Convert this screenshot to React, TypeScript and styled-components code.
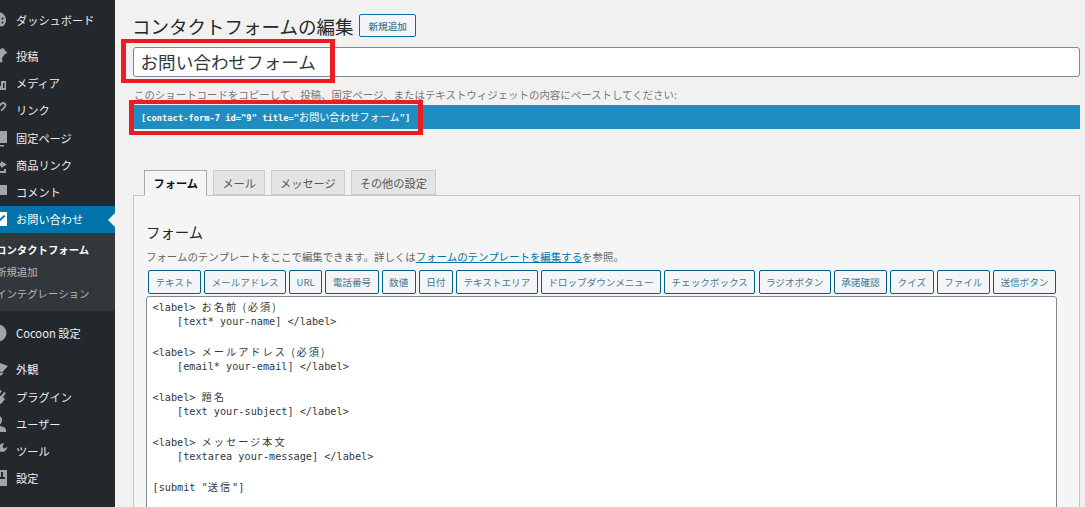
import React from "react";
import styled, { createGlobalStyle } from "styled-components";

const JP = `"Noto Sans CJK JP", "Noto Sans", sans-serif`;
const MONO = `"DejaVu Sans Mono", "Liberation Mono", "Noto Sans CJK JP", monospace`;

const Global = createGlobalStyle`
  html, body { margin: 0; padding: 0; height: 507px; overflow: hidden; background: #f1f1f1; }
  #root { height: 507px; }
  * { box-sizing: border-box; }
`;

const Page = styled.div`
  display: flex;
  width: 1085px;
  height: 507px;
  overflow: hidden;
  font-family: ${JP};
`;

const Sidebar = styled.nav`
  flex: 0 0 115px;
  height: 507px;
  background: #23282d;
  padding-top: 6px;
  overflow: hidden;
`;

const Item = styled.div<{ $active?: boolean; $top?: number }>`
  position: relative;
  display: flex;
  align-items: center;
  gap: 8px;
  height: 27.25px;
  margin-top: ${(p) => p.$top ?? 0}px;
  font-size: 11.2px;
  color: ${(p) => (p.$active ? "#fff" : "#eee")};
  background: ${(p) => (p.$active ? "#0073aa" : "transparent")};
  white-space: nowrap;
  svg { flex: none; margin-left: -12px; color: ${(p) => (p.$active ? "#fff" : "#a0a5aa")}; }
`;

const Arrow = styled.span`
  position: absolute;
  right: 0;
  top: 7px;
  border: 7px solid transparent;
  border-right-color: #f1f1f1;
  border-left-width: 0;
`;

const Sub = styled.div`
  height: 78px;
  padding: 6px 0 0;
  background: #32373c;
`;

const SubItem = styled.div<{ $on?: boolean }>`
  height: 22px;
  line-height: 22px;
  font-size: 10.4px;
  white-space: nowrap;
  margin-left: -4px;
  font-weight: ${(p) => (p.$on ? 700 : 400)};
  color: ${(p) => (p.$on ? "#fff" : "#b4b9be")};
`;

const Main = styled.main`
  flex: 1;
  min-width: 0;
  padding: 0 5px 0 18px;
  color: #444;
`;

const TitleRow = styled.div`
  display: flex;
  align-items: center;
  gap: 6px;
  height: 47px;
  padding-top: 4px;
  margin-left: -1px;
`;

const Heading = styled.h1`
  margin: 0;
  font-size: 18.5px;
  font-weight: 400;
  color: #23282d;
  white-space: nowrap;
`;

const AddNew = styled.span`
  display: flex;
  align-items: center;
  height: 23px;
  padding: 0 8px;
  font-size: 9.6px;
  font-weight: 500;
  color: #47788f;
  background: #f3f5f6;
  border: 1px solid #0071a1;
  border-radius: 2px;
`;

const Marked = styled.div`
  position: relative;
`;

const RedBox = styled.span<{ $w: number; $h: number; $l: number; $t: number; $side: number }>`
  position: absolute;
  left: ${(p) => p.$l}px;
  top: ${(p) => p.$t}px;
  width: ${(p) => p.$w}px;
  height: ${(p) => p.$h}px;
  border-style: solid;
  border-color: #ed1c24;
  border-width: 4px ${(p) => p.$side}px;
  pointer-events: none;
`;

const NameField = styled.div`
  height: 30px;
  padding-left: 6.5px;
  line-height: 28px;
  font-size: 17.6px;
  color: #32373c;
  background: #fff;
  border: 1px solid #7e8993;
  border-radius: 3px;
`;

const Hint = styled.p`
  margin: 0;
  height: 28px;
  padding: 9px 0 0 1px;
  line-height: 17px;
  font-size: 10.45px;
  color: #777;
  white-space: nowrap;
`;

const CodeBar = styled.div`
  height: 24px;
  margin-left: 1px;
  padding-left: 7px;
  line-height: 24px;
  font-family: ${MONO};
  font-size: 8.75px;
  font-weight: 700;
  color: #fff;
  background: #208dc1;
  white-space: nowrap;
`;

const BarJapanese = styled.span`
  font-family: ${JP};
  font-size: 10.1px;
  font-weight: 400;
`;

const Tabs = styled.div`
  display: flex;
  align-items: flex-end;
  gap: 6px;
  height: 25px;
  margin-top: 41px;
  padding-left: 11px;
  position: relative;
  z-index: 1;
`;

const Tab = styled.div<{ $on?: boolean }>`
  display: flex;
  align-items: center;
  height: ${(p) => (p.$on ? "26px" : "25px")};
  margin-bottom: ${(p) => (p.$on ? "-1px" : "0")};
  padding: 0 ${(p) => (p.$on ? "8.5px" : "8px")};
  font-size: 11.2px;
  font-weight: ${(p) => (p.$on ? 700 : 400)};
  color: ${(p) => (p.$on ? "#111" : "#555")};
  background: ${(p) => (p.$on ? "#f5f5f5" : "#e4e4e4")};
  border: 1px solid #ccc;
  border-color: ${(p) => (p.$on ? "#aaa" : "#ccc")};
  border-bottom-color: ${(p) => (p.$on ? "#f5f5f5" : "#ccc")};
`;

const Panel = styled.section`
  height: 330px;
  padding: 26px 22px 0 12px;
  background: #f5f5f5;
  border: 1px solid #c4c4c4;
`;

const SectionTitle = styled.h2`
  margin: 0;
  height: 20px;
  line-height: 20px;
  font-size: 14.4px;
  font-weight: 400;
  color: #23282d;
`;

const Intro = styled.p`
  margin: 7px 0 0;
  height: 15px;
  line-height: 15px;
  font-size: 10.45px;
  color: #666;
  white-space: nowrap;
  a { color: #0073aa; text-decoration: underline; }
`;

const TagRow = styled.div`
  display: flex;
  gap: 3.2px;
  margin: 6px 0 2px 2px;
`;

const Tag = styled.span`
  display: flex;
  align-items: center;
  height: 24px;
  padding: 0 6.4px;
  font-size: 9.6px;
  color: #47788f;
  background: #f3f5f6;
  border: 1px solid #016087;
  border-radius: 2px;
  white-space: nowrap;
`;

const Editor = styled.div`
  height: 240px;
  padding: 2px 5.5px;
  font-family: ${MONO};
  font-size: 10.2px;
  line-height: 15px;
  color: #32373c;
  background: #fff;
  border: 1px solid #7e8993;
  border-radius: 3px;
  white-space: pre;
`;

const Line = styled.div`
  height: 15px;
`;

const Wide = styled.span`
  font-family: ${JP};
  letter-spacing: 2px;
`;

type IconName =
  | "gauge" | "pin" | "media" | "link" | "page" | "cart" | "bubble" | "mail"
  | "circle" | "brush" | "plug" | "user" | "wrench" | "sliders";

const paths: Record<IconName, React.ReactNode> = {
  gauge: <path d="M10 2a8 8 0 0 1 8 8c0 2.600-1.200 4.800-3 6.200H5C3.200 14.800 2 12.600 2 10a8 8 0 0 1 8-8zm4.500 5.500a1 1 0 1 0 0 2 1 1 0 0 0 0-2zm0 4a1 1 0 1 0 0 2 1 1 0 0 0 0-2zM11 5a1 1 0 1 0 0 2 1 1 0 0 0 0-2z" fillRule="evenodd" />,
  pin: <path d="M15 2l4.500 5-2.500 1-3 4 .5 4-2 .5-3.500-4-5 4.500-1-1 4.500-5-3.500-3.500.5-2 4 .5 4-3z" />,
  media: <path d="M4 3h8v8H4zM13 8h5v9H8v-4h5zM15 10v5h1.500v-5z" fillRule="evenodd" />,
  link: <path d="M17.500 3c-1.600-1.600-3.600-1.200-5 .2L10 6l1.500 1.200 2.200-2.500c.8-.8 1.700-.8 2.300-.2.700.7.600 1.600-.1 2.300L12.500 10 14 11.200l2.800-2.900c1.500-1.500 2.300-3.700.7-5.300zM6 11l-3.500 3.500c-1 1-1 2.500 0 3.500s2.500 1 3.500 0L9.500 14 8 13l-3 3-1-1 3-3z" />,
  page: <path d="M4 3h15v12H4zM2 6v11h14v1.500H1V6z" fillRule="evenodd" />,
  cart: <path d="M13 6l6 3.500-6 3.500v-2c-2 0-3 .5-4 2 0-3 1.500-5 4-5zM4 11h3v5h9v-2h2v4H4z" />,
  bubble: <path d="M2 3h17v10h-7l-4 4v-4H2z" />,
  mail: <path d="M1 3h18v14H1zM16 6l-7.500 7L5 9.500l-1.400 1.400 4.900 4.700 8.900-8.300z" fillRule="evenodd" />,
  circle: <circle cx="10" cy="10" r="8.500" />,
  brush: <path d="M9 3l11 4-6 6.500L3 8zM12 14l2-.5 1.500 1-3.500 2.500z" />,
  plug: <path d="M12 3l2 1-3 4 2 1 3-4 2 1-3 4 2 2-4 5-3-1-2 3H6l3-5 3-3-5-3z" />,
  user: <path d="M10 2a4 4 0 0 1 4 4c0 2-1 4-2 4.500v1.500c3 .5 6 1.500 6 4v2H2v-2c0-2.500 3-3.500 6-4v-1.500C7 10 6 8 6 6a4 4 0 0 1 4-4z" />,
  wrench: <path d="M16 2c-3 0-5 2-4.500 5L2 13v3l3 2 7-7.500c2.500 1 6.500.5 7.500-5L17 7.500l-2.500-1L15.500 3z" />,
  sliders: <path d="M1 2h18v16H1zM15 4h-2v5h-2v2h6V9h-2zM9 7H7v5H5v2h2v2h2v-2h2v-2H9z" fillRule="evenodd" />,
};

const Icon = ({ name }: { name: IconName }) => (
  <svg width="20" height="20" viewBox="0 0 20 20" fill="currentColor" aria-hidden="true">
    {paths[name]}
  </svg>
);

const tags = [
  "テキスト", "メールアドレス", "URL", "電話番号", "数値", "日付", "テキストエリア",
  "ドロップダウンメニュー", "チェックボックス", "ラジオボタン", "承諾確認", "クイズ", "ファイル", "送信ボタン",
];

export default function App() {
  return (
    <Page>
      <Global />
      <Sidebar>
        <Item><Icon name="gauge" />ダッシュボード</Item>
        <Item $top={9}><Icon name="pin" />投稿</Item>
        <Item><Icon name="media" />メディア</Item>
        <Item><Icon name="link" />リンク</Item>
        <Item><Icon name="page" />固定ページ</Item>
        <Item><Icon name="cart" />商品リンク</Item>
        <Item><Icon name="bubble" />コメント</Item>
        <Item $active><Icon name="mail" />お問い合わせ<Arrow /></Item>
        <Sub>
          <SubItem $on>コンタクトフォーム</SubItem>
          <SubItem>新規追加</SubItem>
          <SubItem>インテグレーション</SubItem>
        </Sub>
        <Item $top={8.5}><Icon name="circle" />Cocoon 設定</Item>
        <Item $top={9}><Icon name="brush" />外観</Item>
        <Item><Icon name="plug" />プラグイン</Item>
        <Item><Icon name="user" />ユーザー</Item>
        <Item><Icon name="wrench" />ツール</Item>
        <Item><Icon name="sliders" />設定</Item>
      </Sidebar>
      <Main>
        <TitleRow>
          <Heading>コンタクトフォームの編集</Heading>
          <AddNew>新規追加</AddNew>
        </TitleRow>
        <Marked>
          <NameField>お問い合わせフォーム</NameField>
          <RedBox $l={-12} $t={-8} $w={214} $h={44} $side={5} />
        </Marked>
        <Hint>このショートコードをコピーして、投稿、固定ページ、またはテキストウィジェットの内容にペーストしてください:</Hint>
        <Marked>
          <CodeBar>[contact-form-7 id="9" title="<BarJapanese>お問い合わせフォーム</BarJapanese>"]</CodeBar>
          <RedBox $l={-4} $t={-5} $w={294} $h={35} $side={5} />
        </Marked>
        <Tabs>
          <Tab $on>フォーム</Tab>
          <Tab>メール</Tab>
          <Tab>メッセージ</Tab>
          <Tab>その他の設定</Tab>
        </Tabs>
        <Panel>
          <SectionTitle>フォーム</SectionTitle>
          <Intro>フォームのテンプレートをここで編集できます。詳しくは<a>フォームのテンプレートを編集する</a>を参照。</Intro>
          <TagRow>
            {tags.map((t) => <Tag key={t}>{t}</Tag>)}
          </TagRow>
          <Editor>
            <Line>&lt;label&gt; <Wide>お名前 (必須)</Wide></Line>
            <Line>    [text* your-name] &lt;/label&gt;</Line>
            <Line />
            <Line>&lt;label&gt; <Wide>メールアドレス (必須)</Wide></Line>
            <Line>    [email* your-email] &lt;/label&gt;</Line>
            <Line />
            <Line>&lt;label&gt; <Wide>題名</Wide></Line>
            <Line>    [text your-subject] &lt;/label&gt;</Line>
            <Line />
            <Line>&lt;label&gt; <Wide>メッセージ本文</Wide></Line>
            <Line>    [textarea your-message] &lt;/label&gt;</Line>
            <Line />
            <Line>[submit "<Wide>送信</Wide>"]</Line>
          </Editor>
        </Panel>
      </Main>
    </Page>
  );
}
